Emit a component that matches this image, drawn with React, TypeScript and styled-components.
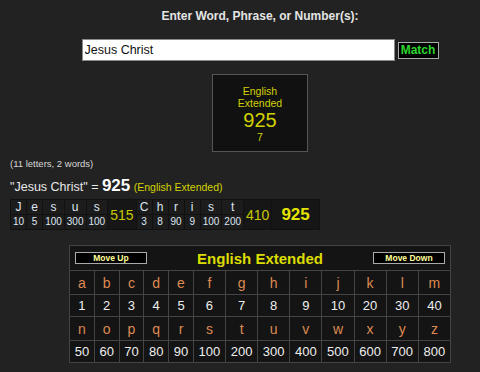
import React, { useState } from "react";
import styled, { createGlobalStyle } from "styled-components";

const GlobalStyle = createGlobalStyle`
  html, body {
    margin: 0;
    padding: 0;
    background: #222222;
    font-family: "Liberation Sans", Arial, sans-serif;
  }
`;

const Page = styled.div`
  padding: 0 10px;
`;

const Center = styled.div`
  margin-left: 40px;
  display: flex;
  flex-direction: column;
  align-items: center;
`;

const Prompt = styled.div`
  padding-top: 9px;
  font-size: 12px;
  line-height: 14px;
  font-weight: bold;
  color: #e4e4e4;
`;

const SearchRow = styled.div`
  margin-top: 16px;
  display: flex;
  align-items: center;
  gap: 3px;
`;

const SearchInput = styled.input`
  box-sizing: border-box;
  width: 313px;
  height: 22px;
  padding: 0 2px;
  border: 1px solid #8a8a8a;
  background: #ffffff;
  color: #111111;
  font-family: "Liberation Sans", Arial, sans-serif;
  font-size: 12.5px;
  outline: none;
`;

const MatchButton = styled.button`
  box-sizing: border-box;
  height: 17px;
  width: 41px;
  padding: 0;
  border: 1px solid #aaaaaa;
  background: #000000;
  color: #2ed62e;
  font-family: "Liberation Sans", Arial, sans-serif;
  font-size: 12px;
  font-weight: bold;
  line-height: 15px;
  cursor: pointer;
`;

const ResultBox = styled.div`
  margin-top: 13px;
  box-sizing: border-box;
  width: 96px;
  height: 78px;
  padding: 10px 8px 0;
  border: 1px solid #555555;
  background: #111111;
  color: #d2d200;
  text-align: center;
`;

const ResultLabel = styled.div`
  font-size: 10.5px;
  line-height: 12px;
`;

const ResultValue = styled.div<{ $big?: boolean }>`
  font-size: ${(p) => (p.$big ? "20px" : "10.5px")};
  line-height: ${(p) => (p.$big ? "22px" : "12px")};
`;

const Counts = styled.div`
  margin-top: 6px;
  font-size: 9.5px;
  line-height: 12px;
  color: #d8d8d8;
`;

const Summary = styled.div`
  margin-top: 7px;
  line-height: 18px;
  color: #e8e8e8;
  font-size: 12.5px;
`;

const SummaryNum = styled.span`
  font-size: 17px;
  font-weight: bold;
  color: #ffffff;
`;

const SummaryCipher = styled.span`
  font-size: 10.5px;
  color: #d4d400;
`;

const Breakdown = styled.table`
  margin-top: 3px;
  border-spacing: 1px;
  background: #111111;
`;

const BCell = styled.td<{ $letter?: boolean }>`
  box-sizing: content-box;
  min-width: 11px;
  padding: 0 2px;
  height: 14px;
  line-height: 14px;
  text-align: center;
  background: #1c1c1c;
  color: #dfe6f2;
  font-size: ${(p) => (p.$letter ? "12px" : "10px")};
`;

const SumCell = styled.td<{ $total?: boolean }>`
  padding: ${(p) => (p.$total ? "0 9px" : "0 2px")};
  text-align: center;
  background: #161616;
  color: ${(p) => (p.$total ? "#e4e400" : "#c8c800")};
  font-size: ${(p) => (p.$total ? "17px" : "14px")};
  font-weight: ${(p) => (p.$total ? "bold" : "normal")};
`;

const ChartWrap = styled.div`
  margin-top: 15px;
  padding-left: 69px;
`;

const Chart = styled.table`
  width: 382px;
  border-collapse: collapse;
  background: #141414;
  border: 1px solid #444444;
`;

const HeaderCell = styled.td`
  height: 24px;
  padding: 0;
  border: 1px solid #444444;
`;

const HeaderBar = styled.div`
  display: flex;
  align-items: center;
  justify-content: space-between;
  padding: 0 5px;
`;

const MoveButton = styled.button`
  box-sizing: border-box;
  width: 72px;
  height: 12px;
  padding: 0;
  border: 1px solid #aaaaaa;
  background: #000000;
  color: #ffff99;
  font-family: "Liberation Sans", Arial, sans-serif;
  font-size: 8.5px;
  font-weight: bold;
  line-height: 10px;
  cursor: pointer;
`;

const ChartTitle = styled.div`
  font-size: 15px;
  font-weight: bold;
  color: #dcdc00;
`;

const ChartCell = styled.td<{ $letter?: boolean }>`
  padding: 0 4.5px;
  height: ${(p) => (p.$letter ? "23px" : "21px")};
  border: 1px solid #444444;
  text-align: center;
  font-size: ${(p) => (p.$letter ? "14px" : "13px")};
  color: ${(p) => (p.$letter ? "#de8a52" : "#eeeeee")};
`;

const values = [
  1, 2, 3, 4, 5, 6, 7, 8, 9, 10, 20, 30, 40, 50, 60, 70, 80, 90, 100, 200,
  300, 400, 500, 600, 700, 800,
];
const letters = "abcdefghijklmnopqrstuvwxyz".split("");
const valueOf = (ch: string) => values[letters.indexOf(ch.toLowerCase())] || 0;

const WordCells = ({ word, row }: { word: string; row: number }) => (
  <>
    {word.split("").map((ch, i) => (
      <BCell key={i} $letter={row === 0}>
        {row === 0 ? ch : valueOf(ch)}
      </BCell>
    ))}
  </>
);

export default function App() {
  const [phrase, setPhrase] = useState("Jesus Christ");
  const words = phrase.split(/\s+/).filter(Boolean);
  const sums = words.map((w) => w.split("").reduce((s, c) => s + valueOf(c), 0));
  const total = sums.reduce((a, b) => a + b, 0);
  const letterCount = words.join("").length;
  const reduced = String(total)
    .split("")
    .reduce((a, b) => a + Number(b), 0);
  const rows = [letters.slice(0, 13), letters.slice(13)];

  return (
    <>
      <GlobalStyle />
      <Page>
        <Center>
          <Prompt>Enter Word, Phrase, or Number(s):</Prompt>
          <SearchRow>
            <SearchInput value={phrase} onChange={(e) => setPhrase(e.target.value)} />
            <MatchButton>Match</MatchButton>
          </SearchRow>
          <ResultBox>
            <ResultLabel>English</ResultLabel>
            <ResultLabel>Extended</ResultLabel>
            <ResultValue $big>{total}</ResultValue>
            <ResultValue>{reduced > 9 ? reduced % 9 || 9 : reduced}</ResultValue>
          </ResultBox>
        </Center>

        <Counts>
          ({letterCount} letters, {words.length} words)
        </Counts>
        <Summary>
          "{phrase}" = <SummaryNum>{total}</SummaryNum>{" "}
          <SummaryCipher>(English Extended)</SummaryCipher>
        </Summary>
        <Breakdown>
          <tbody>
            <tr>
              {words.map((w, i) => (
                <React.Fragment key={i}>
                  <WordCells word={w} row={0} />
                  <SumCell rowSpan={2}>{sums[i]}</SumCell>
                </React.Fragment>
              ))}
              <SumCell rowSpan={2} $total>
                {total}
              </SumCell>
            </tr>
            <tr>
              {words.map((w, i) => (
                <WordCells key={i} word={w} row={1} />
              ))}
            </tr>
          </tbody>
        </Breakdown>
      </Page>

      <ChartWrap>
        <Chart>
          <tbody>
            <tr>
              <HeaderCell colSpan={13}>
                <HeaderBar>
                  <MoveButton>Move Up</MoveButton>
                  <ChartTitle>English Extended</ChartTitle>
                  <MoveButton>Move Down</MoveButton>
                </HeaderBar>
              </HeaderCell>
            </tr>
            {rows.map((row, r) => (
              <React.Fragment key={r}>
                <tr>
                  {row.map((ch) => (
                    <ChartCell key={ch} $letter>
                      {ch}
                    </ChartCell>
                  ))}
                </tr>
                <tr>
                  {row.map((ch) => (
                    <ChartCell key={ch}>{valueOf(ch)}</ChartCell>
                  ))}
                </tr>
              </React.Fragment>
            ))}
          </tbody>
        </Chart>
      </ChartWrap>
    </>
  );
}
